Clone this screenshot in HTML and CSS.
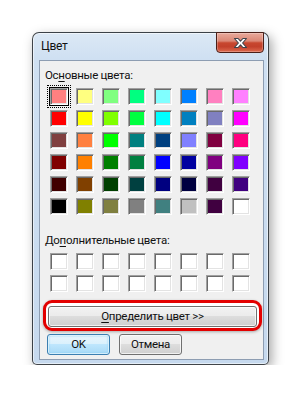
FILE: index.html
```html
<!DOCTYPE html>
<html lang="ru">
<head>
  <meta charset="UTF-8">
  <title>Цвет</title>
  <link rel="stylesheet" href="styles.css">
</head>
<body>
<div class="window">
  <div class="titlebar">
    <span class="title">Цвет</span>
    <div class="close">
      <svg width="15" height="12" viewBox="0 0 15 12">
        <path d="M1.5 1.5h3.6l2.4 2.7 2.4-2.7h3.6L9.6 6l3.9 4.5H9.9L7.5 7.8 5.1 10.5H1.5L5.4 6z" fill="#fff" stroke="#3e434b" stroke-width="1.1" stroke-linejoin="round"/>
      </svg>
    </div>
  </div>
  <div class="client">
    <div class="label">Ос<u>н</u>овные цвета:</div>
    <div class="palette" id="basic"></div>
    <div class="label label-custom">До<u>п</u>олнительные цвета:</div>
    <div class="palette palette-custom" id="custom"></div>
    <div class="define-wrap">
      <button class="btn define"><u>О</u>пределить цвет &gt;&gt;</button>
    </div>
    <div class="actions">
      <button class="btn default">OK</button>
      <button class="btn">Отмена</button>
    </div>
  </div>
</div>

<script>
const basicColors = [
  '#ff8080', '#ffff80', '#80ff80', '#00ff80', '#80ffff', '#0080ff', '#ff80c0', '#ff80ff',
  '#ff0000', '#ffff00', '#80ff00', '#00ff40', '#00ffff', '#0080c0', '#8080c0', '#ff00ff',
  '#804040', '#ff8040', '#00ff00', '#008080', '#004080', '#8080ff', '#800040', '#ff0080',
  '#800000', '#ff8000', '#008000', '#008040', '#0000ff', '#0000a0', '#800080', '#8000ff',
  '#400000', '#804000', '#004000', '#004040', '#000080', '#000040', '#400040', '#400080',
  '#000000', '#808000', '#808040', '#808080', '#408080', '#c0c0c0', '#400040', '#ffffff'
];

const basicEl = document.getElementById('basic');
const customEl = document.getElementById('custom');

basicColors.forEach((c, i) => {
  const sw = document.createElement('div');
  sw.className = 'sw';
  if (i === 0) sw.classList.add('selected');
  sw.style.background = c;
  basicEl.appendChild(sw);
});

for (let i = 0; i < 16; i++) {
  const sw = document.createElement('div');
  sw.className = 'sw';
  sw.style.background = '#ffffff';
  customEl.appendChild(sw);
}
</script>
</body>
</html>
```

FILE: styles.css
```css
body {
  margin: 0;
  background: #fff;
  font-family: Roboto, "Noto Sans", sans-serif;
  font-size: 11.5px;
  letter-spacing: -0.3px;
  color: #111;
}
.window {
  box-sizing: border-box;
  width: 237px;
  height: 333px;
  margin: 32px 0 0 32px;
  padding: 0 4px 4px 6px;
  border: 1px solid rgba(0, 0, 0, 0.7);
  border-radius: 7px 7px 5px 5px;
  display: flex;
  flex-direction: column;
  background: linear-gradient(180deg, #dce8f5 0%, #cfe0f2 26px, #c6d9ee 100%);
  box-shadow: 3px 4px 12px rgba(0, 0, 0, 0.35), inset 0 0 0 1px rgba(255, 255, 255, 0.55);
}
.titlebar {
  height: 27px;
  display: flex;
  justify-content: space-between;
  align-items: flex-start;
}
.title {
  margin: 6px 0 0 2px;
  font-size: 12px;
  line-height: 15px;
}
.close {
  box-sizing: border-box;
  width: 48px;
  height: 21px;
  margin-top: -1px;
  border: 1px solid #4a1f18;
  border-radius: 0 0 4px 4px;
  background: linear-gradient(180deg, #e9aa9c 0%, #db8876 42%, #c8472f 52%, #c2402b 72%, #dd6a4f 100%);
  box-shadow: inset 0 0 0 1px rgba(255, 255, 255, 0.25);
  display: flex;
  align-items: center;
  justify-content: center;
}
.client {
  flex: 1;
  background: #f0f0f0;
  border: 1px solid #8d9db2;
  display: flex;
  flex-direction: column;
  align-items: flex-start;
}
.label {
  margin: 7px 0 0 5px;
  line-height: 15px;
}
.label-custom {
  margin-top: 18px;
}
u {
  text-underline-offset: 2px;
}
.palette {
  margin: 5px 0 0 10px;
  display: grid;
  grid-template-columns: repeat(8, 18px);
  grid-auto-rows: 17px;
  column-gap: 8px;
  row-gap: 5px;
}
.sw {
  position: relative;
  box-sizing: border-box;
  border: 1px solid;
  border-color: #a0a0a0 #fff #fff #a0a0a0;
  box-shadow: inset 1px 1px 0 #6a6a6a, inset -1px -1px 0 #e3e3e3;
}
.sw.selected {
  box-shadow: 0 0 0 1px #000, inset 1px 1px 0 #6a6a6a, inset -1px -1px 0 #e3e3e3;
}
.sw.selected::after {
  content: "";
  position: absolute;
  inset: -4px;
  border: 1px dotted #000;
}
.define-wrap {
  position: relative;
  margin: 14px 0 0 8px;
}
.define-wrap::before {
  content: "";
  position: absolute;
  inset: -6px -5px -4px -5px;
  border: 3px solid #e30000;
  border-radius: 9px;
  background: #fff;
  box-shadow: 0 1px 3px rgba(0, 0, 0, 0.3);
}
.btn {
  position: relative;
  box-sizing: border-box;
  height: 21px;
  padding: 0;
  font-family: inherit;
  font-size: 11.5px;
  letter-spacing: -0.3px;
  line-height: 17px;
  color: #111;
  border: 1px solid #707070;
  border-radius: 3px;
  background: linear-gradient(180deg, #f2f2f2 0%, #ebebeb 50%, #dddddd 50%, #cfcfcf 100%);
  box-shadow: inset 0 0 0 1px rgba(255, 255, 255, 0.7);
}
.define {
  width: 209px;
}
.actions {
  margin: 7px 0 0 7px;
  display: flex;
  gap: 9px;
}
.actions .btn {
  width: 63px;
}
.btn.default {
  border-color: #3c7fb1;
  background: linear-gradient(180deg, #eaf6fd 0%, #d9f0fc 50%, #bee6fd 50%, #a7d9f5 100%);
  box-shadow: inset 0 0 0 1px rgba(255, 255, 255, 0.6), inset 0 0 2px 1px #8fd2f5;
}
```
